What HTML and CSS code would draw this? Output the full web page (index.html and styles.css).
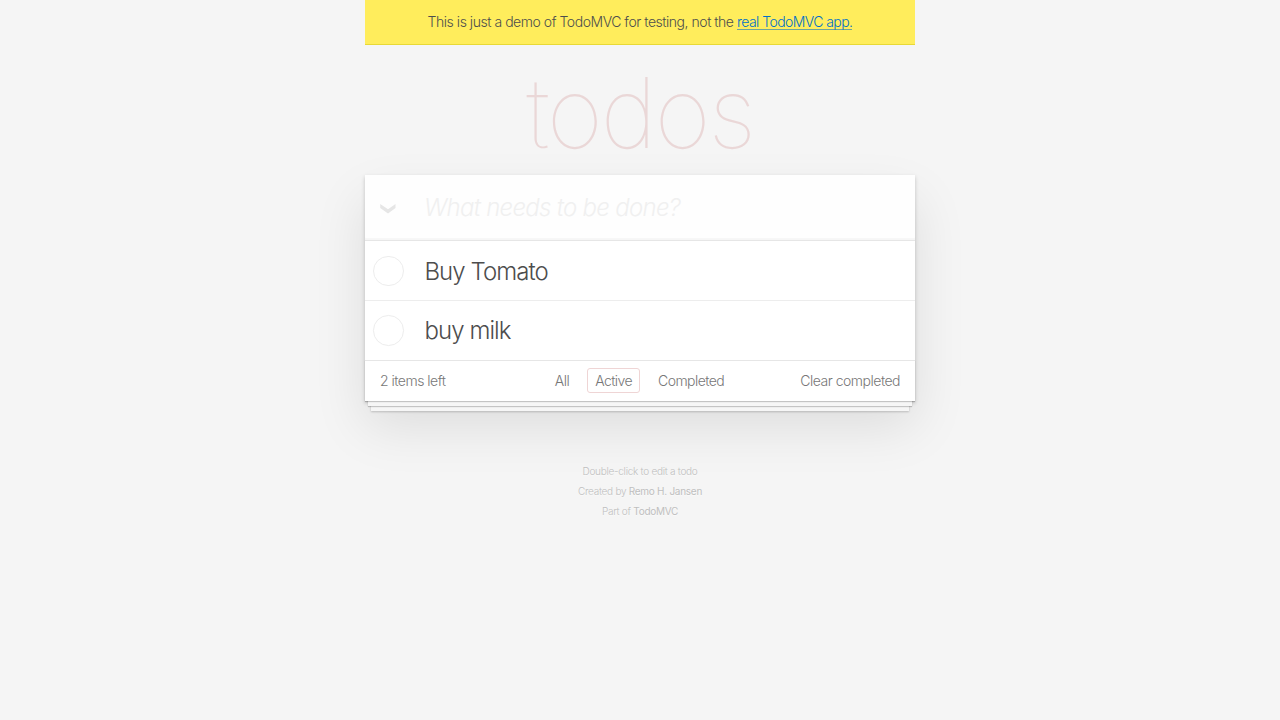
FILE: index.html
```html
<!DOCTYPE html>
<html lang="en">
<head>
<meta charset="utf-8">
<title>TodoMVC</title>
<link rel="stylesheet" href="styles.css">
</head>
<body>
<div class="page">
  <div class="banner"><p>This is just a demo of TodoMVC for testing, not the <a href="#">real TodoMVC app.</a></p></div>
  <h1 class="title">todos</h1>
  <section class="card">
    <header class="entry">
      <svg class="chevron" width="16" height="10" viewBox="0 0 16 10"><path d="M0.2 0 L8 5.2 L15.5 0 V4 L8 9.6 L0.2 4Z" fill="#e6e6e6"/></svg>
      <span class="placeholder">What needs to be done?</span>
    </header>
    <ul class="list">
      <li class="item"><span class="toggle"></span><span class="label">Buy Tomato</span></li>
      <li class="item"><span class="toggle"></span><span class="label">buy milk</span></li>
    </ul>
    <footer class="bar">
      <span class="count">2 items left</span>
      <nav class="filters"><a>All</a><a class="selected">Active</a><a>Completed</a></nav>
      <span class="clear">Clear completed</span>
    </footer>
  </section>
  <footer class="info">
    <p class="hint">Double-click to edit a todo</p>
    <p class="credit">Created by <b>Remo H. Jansen</b></p>
    <p class="part">Part of <b>TodoMVC</b></p>
  </footer>
</div>
</body>
</html>
```
FILE: styles.css
```css
* { box-sizing: border-box; }
body {
  margin: 0;
  background: #f5f5f5;
  color: #4d4d4d;
  font: 300 14px/20px Inter, "Liberation Sans", sans-serif;
}
.page { width: 550px; margin: 0 auto; }
.banner {
  height: 45px;
  background: #ffed5c;
  border-bottom: 1px solid #e8d936;
  text-align: center;
  padding-top: 12px;
  letter-spacing: -0.46px;
}
p { margin: 0; white-space: nowrap; }
.banner a {
  color: #0070c9;
  text-decoration: none;
  border-bottom: 1px solid #70a598;
  display: inline-block;
  line-height: 15px;
  letter-spacing: -0.56px;
}
.title {
  margin: 0;
  height: 130px;
  padding-top: 5px;
  text-align: center;
  font-size: 97px;
  line-height: 126px;
  font-weight: 100;
  letter-spacing: -2.4px;
  color: #ead7d7;
}
.card {
  height: 226px;
  background: #fff;
  box-shadow: 0 2px 4px rgba(0,0,0,.2), 0 25px 50px rgba(0,0,0,.1);
}
.entry {
  display: flex;
  align-items: center;
  height: 65px;
  padding-left: 15px;
  background: #fefefe;
  box-shadow: inset 0 -2px 1px rgba(0,0,0,.03);
}
.chevron { margin: 3px 28px 0 0; }
.placeholder {
  padding-top: 1px;
  font-size: 24px;
  font-style: italic;
  color: #f0f0f0;
  letter-spacing: -.72px;
}
.list { list-style: none; margin: 0; padding: 0; border-top: 1px solid #e6e6e6; }
.item { display: flex; align-items: center; height: 60px; padding: 0 0 0 8px; font-size: 24px; border-bottom: 1px solid #ededed; }
.item:last-child { height: 59px; border-bottom: 0; }
.toggle { width: 30.5px; height: 30.5px; border: 1px solid #ededed; border-radius: 50%; margin-right: 20.9px; }
.label { letter-spacing: -.92px; line-height: 30px; padding-top: 1px; }
.item:first-child .label { padding-top: 2px; }
.item:first-child .toggle { margin-top: 1px; }
.bar {
  display: grid;
  grid-template-columns: 1fr auto 1fr;
  align-items: center;
  height: 41px;
  padding: 0 15px;
  border-top: 1px solid #e6e6e6;
  color: #777;
  letter-spacing: -.5px;
  box-shadow: 0 1px 1px rgba(0,0,0,.2), 0 8px 0 -3px #f6f6f6, 0 9px 1px -3px rgba(0,0,0,.2), 0 16px 0 -6px #f6f6f6, 0 17px 2px -6px rgba(0,0,0,.2);
}
.filters { display: flex; gap: 10px; margin: 0 1px 1px 0; letter-spacing: -.56px; }
.filters a { padding: 2px 7px; border: 1px solid transparent; border-radius: 3px; height: 25px; }
.filters .selected { border-color: #efd5d5; }
.clear { text-align: right; }
.info { margin-top: 60px; text-align: center; font-size: 10px; color: #bfbfbf; letter-spacing: -.27px; text-shadow: 0 1px 0 rgba(255,255,255,.5); }
.info b { font-weight: 400; }
```
